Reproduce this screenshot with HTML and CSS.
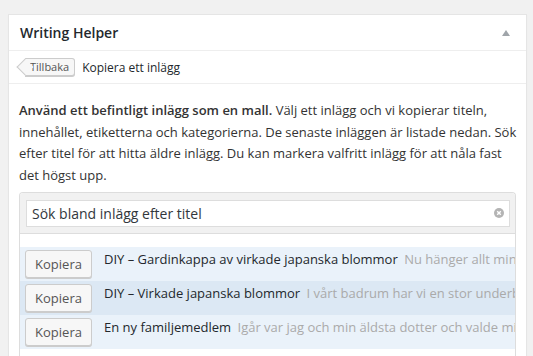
FILE: index.html
```html
<!DOCTYPE html>
<html lang="sv">
<head>
    <meta charset="UTF-8">
    <title>Writing Helper</title>
    <link rel="stylesheet" href="styles.css">
</head>
<body>
    <div class="postbox">
        <h2 class="hndle">
            <span>Writing Helper</span>
            <span class="toggle-arrow"></span>
        </h2>
        <div class="nav-row">
            <a href="#" class="back-button">Tillbaka</a>
            <span class="nav-title">Kopiera ett inlägg</span>
        </div>
        <div class="inside">
            <p class="intro"><strong>Använd ett befintligt inlägg som en mall.</strong> Välj ett inlägg och vi kopierar titeln, innehållet, etiketterna och kategorierna. De senaste inläggen är listade nedan. Sök efter titel för att hitta äldre inlägg. Du kan markera valfritt inlägg för att nåla fast det högst upp.</p>

            <div class="post-picker">
                <div class="search-area">
                    <div class="search-field">
                        <input type="text" value="Sök bland inlägg efter titel" aria-label="Sök bland inlägg">
                        <span class="clear-icon">
                            <svg width="10" height="10" viewBox="0 0 10 10">
                                <circle cx="5" cy="5" r="5" fill="#b4b4b4"/>
                                <path d="M3.2 3.2 L6.8 6.8 M6.8 3.2 L3.2 6.8" stroke="#fff" stroke-width="1.4"/>
                            </svg>
                        </span>
                    </div>
                </div>
                <ul class="post-list">
                    <li class="post-row">
                        <button type="button">Kopiera</button>
                        <span class="post-text"><span class="post-title">DIY – Gardinkappa av virkade japanska blommor</span> <span class="post-excerpt">Nu hänger allt min gardinkappa i fönstret</span></span>
                    </li>
                    <li class="post-row active">
                        <button type="button">Kopiera</button>
                        <span class="post-text"><span class="post-title">DIY – Virkade japanska blommor</span> <span class="post-excerpt">I vårt badrum har vi en stor underbar</span></span>
                    </li>
                    <li class="post-row">
                        <button type="button">Kopiera</button>
                        <span class="post-text"><span class="post-title">En ny familjemedlem</span> <span class="post-excerpt">Igår var jag och min äldsta dotter och valde min</span></span>
                    </li>
                </ul>
            </div>
        </div>
    </div>
</body>
</html>
```

FILE: styles.css
```css
body {
    margin: 0;
    padding: 14px 6px 0 8px;
    background-color: #f1f1f1;
    font-family: 'Open Sans', sans-serif;
    color: #333;
    font-size: 13px;
    overflow: hidden;
}
.postbox {
    background-color: #fff;
    border: 1px solid #e5e5e5;
    box-shadow: 0 1px 1px rgba(0, 0, 0, 0.04);
}
.hndle {
    display: flex;
    justify-content: space-between;
    align-items: center;
    height: 35px;
    margin: 0;
    padding: 0 16px 0 11px;
    font-size: 14px;
    font-weight: 600;
    color: #23282d;
    border-bottom: 1px solid #eee;
}
.toggle-arrow {
    width: 0;
    height: 0;
    border-left: 4px solid transparent;
    border-right: 4px solid transparent;
    border-bottom: 6px solid #a0a5aa;
}
.nav-row {
    display: flex;
    align-items: center;
    height: 32px;
    padding: 0 0 0 9px;
    border-bottom: 1px solid #eee;
}
.back-button {
    position: relative;
    margin-left: 7px;
    padding: 0 5px;
    height: 16px;
    line-height: 16px;
    font-size: 11px;
    color: #555;
    text-decoration: none;
    background-color: #f7f7f7;
    border: 1px solid #ccc;
    border-left: none;
    border-radius: 0 3px 3px 0;
    box-shadow: 0 1px 0 #ccc;
}
.back-button::before {
    content: '';
    position: absolute;
    left: -6px;
    top: 2px;
    width: 11px;
    height: 11px;
    background-color: #f7f7f7;
    border-left: 1px solid #ccc;
    border-bottom: 1px solid #ccc;
    transform: rotate(45deg);
}
.nav-title {
    margin-left: 7px;
    font-size: 12px;
    color: #23282d;
}
.inside {
    padding: 0 10px 0 10px;
}
.intro {
    margin: 16px -3px 5px 0;
    line-height: 21.7px;
    font-size: 13px;
}
.intro strong {
    font-weight: 600;
}
.post-picker {
    border: 1px solid #ddd;
    border-bottom: none;
    border-radius: 4px 4px 0 0;
    overflow: hidden;
}
.search-area {
    background-color: #f1f1f1;
    padding: 7px 5px 6px 6px;
    border-bottom: 1px solid #ddd;
}
.search-field {
    position: relative;
}
.search-field input {
    display: block;
    width: 100%;
    box-sizing: border-box;
    height: 27px;
    padding: 0 24px 0 5px;
    font-family: 'Open Sans', sans-serif;
    font-size: 14px;
    color: #32373c;
    border: 1px solid #ddd;
    background-color: #fff;
    outline: none;
}
.clear-icon {
    position: absolute;
    right: 6px;
    top: 8px;
    line-height: 0;
}
.post-list {
    list-style: none;
    margin: 13px 0 0 0;
    padding: 0 0 20px 0;
}
.post-row {
    display: flex;
    align-items: flex-start;
    height: 34px;
    padding: 0 0 0 5px;
    background-color: #eaf2fa;
    white-space: nowrap;
    overflow: hidden;
}
.post-row.active {
    background-color: #dce8f4;
}
.post-row button {
    flex-shrink: 0;
    margin-top: 3px;
    width: 67px;
    height: 28px;
    font-family: 'Open Sans', sans-serif;
    font-size: 13px;
    color: #555;
    background-color: #f7f7f7;
    border: 1px solid #ccc;
    border-radius: 3px;
    box-shadow: 0 1px 0 #ccc;
    cursor: pointer;
}
.post-text {
    margin-left: 12px;
    padding-top: 2px;
    line-height: 20px;
}
.post-title {
    color: #23282d;
}
.post-excerpt {
    margin-left: 3px;
    color: #aaa;
}
```
